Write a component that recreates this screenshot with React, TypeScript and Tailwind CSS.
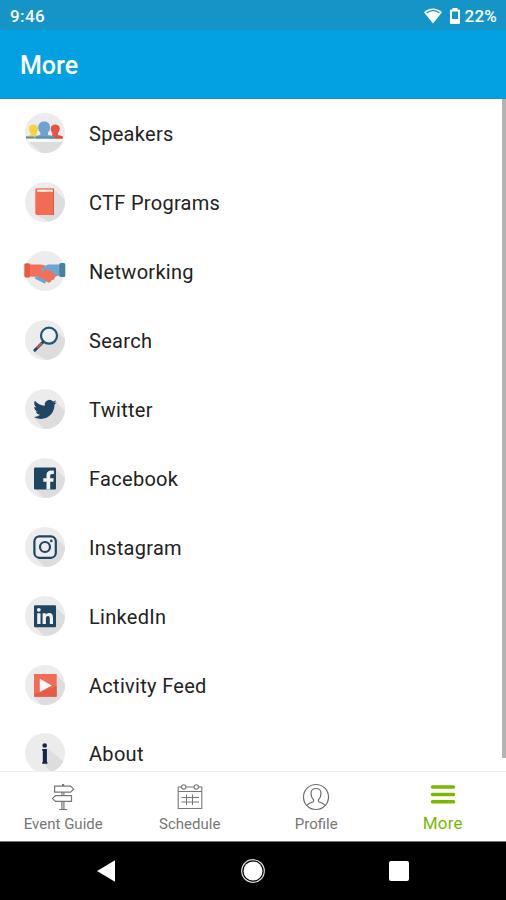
import type { ReactNode } from "react";

const NAVY = "#1f4560";

function Disc({ id, shadow, children }: { id: string; shadow?: string; children: ReactNode }) {
  return (
    <svg viewBox="0 0 40 40" className="size-10 shrink-0 overflow-visible">
      <clipPath id={id}>
        <circle cx="20" cy="20" r="20" />
      </clipPath>
      <circle cx="20" cy="20" r="20" fill="#ececec" />
      {shadow && <path d={shadow} fill="#dddddd" clipPath={`url(#${id})`} />}
      {children}
    </svg>
  );
}

const items: { label: string; shadow?: string; icon: ReactNode }[] = [
  {
    label: "Speakers",
    shadow: "M3 28H38L40 40H17Z",
    icon: (
      <>
        <path d="M1.500 25h36l-1 4H3z" fill="#f8f8f8" />
        <path d="M1 25.500v-1.300c0-1 1.500-1.700 4.700-2.200V20C4.400 18.800 4 17 4 15.500c0-5.500 9-5.500 9 0 0 1.500-.4 3.300-1.700 4.500v2l4 3.500z" fill="#f7d23e" />
        <path d="M23.700 25.500l3.700-3.500v-2c-1.300-1.200-1.700-3-1.700-4.500 0-5.500 9-5.500 9 0 0 1.500-.4 3.300-1.700 4.500v2c3.200.5 4.700 1.200 4.700 2.200v1.300z" fill="#e8543f" />
        <path d="M9 25.500c0-2 2-2.700 6.300-3.500v-2.500c-1.600-1.500-2.100-3.500-2.100-5.200 0-7.700 11.900-7.700 11.900 0 0 1.700-.5 3.700-2.100 5.200V22c4.300.8 6.300 1.500 6.300 3.500z" fill="#6ba3d2" />
        <path d="M1 23.500h8v2H1zM11 23.500h19v2H11z" fill="#5b90ad" />
        <path d="M30 23.500h7.700v2H30z" fill="#dc4a38" />
      </>
    ),
  },
  {
    label: "CTF Programs",
    shadow: "M29 7L48 26V52L11 33Z",
    icon: (
      <>
        <path d="M10.300 8c0-1.200.6-1.700 1.700-1.700h16.700V33H12c-1.100 0-1.700-.5-1.700-1.700z" fill="#f26c54" />
        <path d="M12.200 7.600h15.600v2.200H12.200z" fill="#fff1ee" />
        <path d="M28 7v26h1V7z" fill="#d95642" />
      </>
    ),
  },
  {
    label: "Networking",
    icon: (
      <>
        <path d="M35 13.500H23l-5 2.500-4 6 5 4 9 3 2.500-3.500 4.500-1z" fill="#6fa5d3" />
        <path d="M4 13.500h11.500l5 1-4.500 4.500c1.500 2 4 1.500 6-1l8 5c1.500 1.200 1 3-.5 3.200.4 1.800-1 2.800-2.500 2.300-.5 1.800-2.600 4-4 3L14 26 4 25.500z" fill="#f36f58" />
        <path d="M9.500 27.500l2.500-2.800 9.500 4.500-1.500 3.500z" fill="#6fa5d3" />
        <rect x="-.7" y="12.200" width="5.700" height="14.300" rx="1.500" fill="#ea5744" />
        <rect x="34.300" y="12" width="6" height="14" rx="1.500" fill="#4780a3" />
      </>
    ),
  },
  {
    label: "Search",
    shadow: "M31 11L46 24V54L9 33L20 23Z",
    icon: (
      <>
        <circle cx="24" cy="15.700" r="8" fill="#eef1f3" stroke="#1f5873" strokeWidth="2.200" />
        <path d="M18.300 21.700L9.800 30.300" stroke={NAVY} strokeWidth="2.900" strokeLinecap="round" />
        <path d="M16.800 23.200L12 28" stroke="#dc5a4b" strokeWidth="1.700" />
      </>
    ),
  },
  {
    label: "Twitter",
    shadow: "M31 13L50 32V50H28L9 29Z",
    icon: (
      <path
        transform="translate(8.300 8.700) scale(.98)"
        fill={NAVY}
        d="M23.950 4.570a10 10 0 0 1-2.820.77 4.960 4.960 0 0 0 2.160-2.720c-.95.550-2 .950-3.130 1.180a4.920 4.920 0 0 0-8.380 4.480C7.690 8.090 4.070 6.130 1.640 3.160a4.820 4.820 0 0 0-.67 2.470c0 1.710.87 3.210 2.190 4.100a4.900 4.900 0 0 1-2.230-.62v.06a4.920 4.920 0 0 0 3.950 4.830 5 5 0 0 1-2.210.08 4.940 4.940 0 0 0 4.600 3.420A9.870 9.870 0 0 1 0 19.540a14 14 0 0 0 7.550 2.210c9.050 0 14-7.500 14-13.980 0-.210 0-.420-.020-.630a9.940 9.940 0 0 0 2.460-2.550z"
      />
    ),
  },
  {
    label: "Facebook",
    shadow: "M30 10L50 30V50H29L10 31Z",
    icon: (
      <>
        <rect x="9" y="9.500" width="22" height="22" rx="1.200" fill={NAVY} />
        <path d="M21.500 31.500v-7.700h-3.200v-3.600h3.200v-2.700c0-3.600 2-5 4.800-5 1.200 0 2.100.1 2.600.2v3.200h-1.800c-1.500 0-1.900.8-1.900 2v2.300h3.500l-.5 3.600h-3v7.700z" fill="#f2f2f2" />
      </>
    ),
  },
  {
    label: "Instagram",
    shadow: "M31 11L50 30V50H29L11 31Z",
    icon: (
      <>
        <rect x="9.400" y="9.400" width="21.400" height="21.400" rx="5" fill="#ececec" stroke={NAVY} strokeWidth="2.200" />
        <circle cx="20" cy="20" r="5" fill="none" stroke={NAVY} strokeWidth="2.200" />
        <circle cx="26.300" cy="13.900" r="1.300" fill={NAVY} />
      </>
    ),
  },
  {
    label: "LinkedIn",
    shadow: "M30 10L50 30V50H29L10 31Z",
    icon: (
      <>
        <rect x="9" y="9.300" width="22" height="22" rx="1" fill={NAVY} />
        <circle cx="13.800" cy="13.800" r="1.900" fill="#f2f2f2" />
        <path d="M12.200 17.300h3.300V28h-3.300zM17.600 17.300h3.100v1.500c.6-1.100 1.800-1.800 3.300-1.800 3.100 0 4 1.900 4 5V28h-3.200v-5.300c0-1.600-.3-2.800-1.800-2.800-1.600 0-2.100 1.200-2.100 2.800V28h-3.300z" fill="#f2f2f2" />
      </>
    ),
  },
  {
    label: "Activity Feed",
    shadow: "M9 32H31V9L50 30V50H26Z",
    icon: (
      <>
        <rect x="9" y="9" width="22.700" height="22.700" fill="#f16c55" />
        <path d="M9 31.700V29l22.700-8v10.700z" fill="#e65d47" />
        <path d="M14.800 13.800L26.700 20.400 14.800 27z" fill="#fff" />
      </>
    ),
  },
  {
    label: "About",
    shadow: "M21 14L45 34V50H35L18 30Z",
    icon: (
      <>
        <circle cx="19.700" cy="12.500" r="2.300" fill="#14244a" />
        <path d="M17.200 16h4.700v13h.5v1.800h-5.200V29h.6V17.800h-.6z" fill="#14244a" />
      </>
    ),
  },
];

function SignpostIcon() {
  return (
    <svg viewBox="0 0 24 28" className="h-7 w-6" fill="none" stroke="#777" strokeWidth="1.200">
      <path d="M11.600 1v2M12.600 1v2M3.600 3.200h16l3 3-3 3h-16zM20.500 12.600H4.500l-3 2.900 3 2.900h16zM10.900 9.200v3.400M12.900 9.200v3.400M10.900 18.400v8M12.900 18.400v8M8.200 26.500h8" />
    </svg>
  );
}

function CalendarIcon() {
  return (
    <svg viewBox="0 0 26 28" className="h-7 w-[26px]" fill="none" stroke="#777" strokeWidth="1.100">
      <path d="M4.500 4H1.200v21.500h23.600V4h-3.300M9 4h8M1.200 8.500h23.600" />
      <circle cx="6.700" cy="3.900" r="2.200" />
      <circle cx="19.300" cy="3.900" r="2.200" />
      <path d="M4.500 14.500h17.500M4.500 19h17.500M9.500 11.500v10.500M15.500 11.500v10.500" strokeWidth="1" />
    </svg>
  );
}

function ProfileIcon() {
  return (
    <svg viewBox="0 0 28 28" className="size-7" fill="none" stroke="#6c6c6c" strokeWidth="1.200">
      <circle cx="14" cy="14" r="12.500" />
      <path d="M5 22.500c1-2 3-2.600 5.200-3.300 1.300-.5 1.700-1.400 1.200-2.600C9.800 14.800 9 13 9 10.500 9 7.500 11 5.500 14 5.500s5 2 5 5c0 2.500-.8 4.300-2.400 6.100-.5 1.200-.1 2.100 1.200 2.600 2.200.7 4.200 1.300 5.200 3.300" />
    </svg>
  );
}

function MenuIcon() {
  return (
    <svg viewBox="0 0 26 28" className="h-7 w-[26px]" stroke="#7ab800" strokeWidth="3.500" strokeLinecap="round">
      <path d="M2.500 4h21M2.500 11.400h21M2.500 18.800h21" />
    </svg>
  );
}

const tabs = [
  { label: "Event Guide", icon: <SignpostIcon /> },
  { label: "Schedule", icon: <CalendarIcon /> },
  { label: "Profile", icon: <ProfileIcon /> },
];

export default function App() {
  return (
    <div className="flex h-[900px] w-[506px] flex-col overflow-hidden bg-white font-['Roboto',sans-serif]">
      <div className="flex h-[30px] shrink-0 items-center justify-between bg-[#1594c8] pt-[2px] pr-[9px] pl-[10px] text-white">
        <span className="text-[17px] leading-none font-medium tracking-[0.4px]">9:46</span>
        <div className="flex items-center">
          <svg viewBox="0 0 18 16" className="h-4 w-[18px]">
            <path d="M0 4.200C5-.6 13-.6 18 4.200L9 15.500z" fill="#fff" />
            <path d="M2.600 4.900c4-2.800 8.800-2.800 12.800 0" stroke="#1594c8" strokeWidth="1.200" fill="none" />
          </svg>
          <svg viewBox="0 0 12 18" className="ml-[7px] h-[18px] w-3">
            <path d="M3.500 1h5v1.500H10a1 1 0 0 1 1 1V16a1 1 0 0 1-1 1H2a1 1 0 0 1-1-1V3.500a1 1 0 0 1 1-1h1.500z" fill="#fff" />
            <path d="M3 4.500h6V12H3z" fill="#1594c8" />
          </svg>
          <span className="ml-[4px] text-[17px] leading-none font-medium tracking-[0.2px]">22%</span>
        </div>
      </div>
      <header className="flex h-[69px] shrink-0 items-center border-b border-[#1692cb] bg-[#03a1e2] pt-[3px] pl-5">
        <h1 className="text-[25px] leading-none font-medium text-white">More</h1>
      </header>

      <main className="flex min-h-0 flex-1 overflow-hidden">
        <ul className="flex-1">
          {items.map((item, i) => (
            <li key={item.label} className="flex h-[68.900px] items-center gap-6 pl-[25px]">
              <Disc id={`disc-${i}`} shadow={item.shadow}>
                {item.icon}
              </Disc>
              <span className="pt-[2px] text-[20px] leading-none tracking-[0.3px] text-[#222]">{item.label}</span>
            </li>
          ))}
        </ul>
        <div className="h-[659px] w-1 bg-[#b3b3b3]" />
      </main>

      <nav className="grid h-[71px] shrink-0 grid-cols-4 border-t border-[#eee] border-b border-b-[#777] bg-white pt-[11px]">
        {tabs.map((tab) => (
          <div key={tab.label} className="flex flex-col items-center">
            {tab.icon}
            <span className="mt-[6px] text-[15px] leading-none text-[#777]">{tab.label}</span>
          </div>
        ))}
        <div className="flex flex-col items-center">
          <MenuIcon />
          <span className="mt-1 text-[17px] leading-none tracking-[0.2px] text-[#7ab800]">More</span>
        </div>
      </nav>

      <footer className="flex h-[58px] shrink-0 items-center justify-between bg-black pr-[97px] pl-[96px]">
        <svg viewBox="0 0 20 24" className="h-6 w-5">
          <path d="M1 12L19 1.200V22.800z" fill="#fff" />
        </svg>
        <svg viewBox="0 0 26 26" className="size-[26px]">
          <circle cx="13" cy="13" r="11.300" fill="none" stroke="#ddd" strokeWidth="1.200" />
          <circle cx="13" cy="13" r="9.500" fill="#fff" />
        </svg>
        <div className="size-5 rounded-[2px] bg-white" />
      </footer>
    </div>
  );
}
